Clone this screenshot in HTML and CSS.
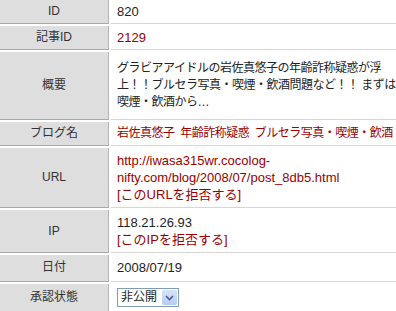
FILE: index.html
```html
<!DOCTYPE html>
<html lang="ja">
<head>
  <meta charset="UTF-8">
  <title>トラックバック詳細</title>
  <link rel="stylesheet" href="styles.css">
</head>
<body>
  <table class="detail">
    <tr>
      <th>ID</th>
      <td>820</td>
    </tr>
    <tr>
      <th>記事ID</th>
      <td><a href="#">2129</a></td>
    </tr>
    <tr class="tall">
      <th>概要</th>
      <td class="ja">グラビアアイドルの岩佐真悠子の年齢詐称疑惑が浮上！！ブルセラ写真・喫煙・飲酒問題など！！ まずは喫煙・飲酒から…</td>
    </tr>
    <tr>
      <th>ブログ名</th>
      <td class="ja nowrap"><a href="#">岩佐真悠子&nbsp; 年齢詐称疑惑&nbsp; ブルセラ写真・喫煙・飲酒</a></td>
    </tr>
    <tr class="links">
      <th>URL</th>
      <td>
        <a href="#">http://iwasa315wr.cocolog-nifty.com/blog/2008/07/post_8db5.html</a><br>
        <a href="#">[このURLを拒否する]</a>
      </td>
    </tr>
    <tr class="links">
      <th>IP</th>
      <td>
        118.21.26.93<br>
        <a href="#">[このIPを拒否する]</a>
      </td>
    </tr>
    <tr class="mid">
      <th>日付</th>
      <td>2008/07/19</td>
    </tr>
    <tr class="mid">
      <th>承認状態</th>
      <td>
        <span class="select">
          <span class="select-value">非公開</span>
          <span class="select-btn">
            <svg width="9" height="6" viewBox="0 0 9 6"><path d="M1 1 L4.5 4.5 L8 1" fill="none" stroke="#4d6185" stroke-width="1.6"/></svg>
          </span>
        </span>
      </td>
    </tr>
  </table>
</body>
</html>
```

FILE: styles.css
```css
body {
  margin: 0;
  background: #fff;
  color: #222;
  font-family: "Liberation Sans", "Noto Sans CJK JP", sans-serif;
  font-size: 13px;
  overflow: hidden;
}

.detail {
  border-collapse: separate;
  border-spacing: 2px;
  margin: -2px;
  width: 404px;
  table-layout: fixed;
}

.detail th {
  box-sizing: border-box;
  width: 109px;
  padding: 3px 0;
  background: #dedede;
  border-right: 1px solid #b4b4b4;
  border-bottom: 1px solid #a8a8a8;
  font-weight: normal;
  font-size: 12px;
  color: #333;
  line-height: 17px;
  text-align: center;
}

.detail td {
  padding: 3px 0 3px 6px;
  background: #fff;
  border-bottom: 1px solid #d6d6d6;
  line-height: 17px;
  vertical-align: middle;
}

.detail .tall td {
  padding-top: 8px;
  padding-bottom: 8px;
}

.detail .links td {
  padding-top: 4px;
  padding-bottom: 4px;
}

.detail .mid td,
.detail .mid th {
  padding-top: 4px;
  padding-bottom: 5px;
}

.ja {
  font-size: 12px;
  letter-spacing: -0.5px;
}

.nowrap {
  white-space: nowrap;
}

a {
  color: #990000;
  text-decoration: none;
}

.select {
  display: inline-flex;
  align-items: stretch;
  height: 17px;
  border: 1px solid #7f9db9;
  background: #fff;
  vertical-align: middle;
}

.select-value {
  padding: 0 4px 0 3px;
  line-height: 17px;
  font-size: 12px;
}

.select-btn {
  width: 15px;
  margin: 1px;
  display: flex;
  align-items: center;
  justify-content: center;
  background: linear-gradient(#d6e3fb, #b5cbf3);
  border-radius: 2px;
}
```
